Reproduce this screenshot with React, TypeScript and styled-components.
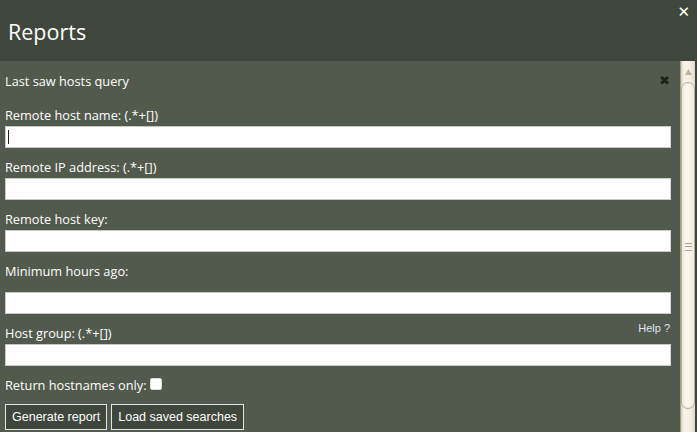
import styled, { createGlobalStyle } from 'styled-components';

const Global = createGlobalStyle`
  html, body {
    margin: 0;
    padding: 0;
    background: #3f463b;
  }
  body {
    width: 697px;
    height: 432px;
    overflow: hidden;
    font-family: 'Open Sans', 'DejaVu Sans', sans-serif;
  }
`;

const Dialog = styled.div`
  width: 697px;
  height: 432px;
  display: flex;
  flex-direction: column;
  background: #3f463b;
`;

const Header = styled.div`
  height: 61px;
  flex: none;
  display: flex;
  align-items: flex-start;
  justify-content: space-between;
  padding: 0 0 0 8px;
  box-sizing: border-box;
`;

const Title = styled.h1`
  margin: 17px 0 0 0;
  font-size: 21.5px;
  font-weight: 400;
  color: #ffffff;
  line-height: 30px;
`;

const CloseX = styled.span`
  margin: 4px 7px 0 0;
  color: #ffffff;
  font-family: 'DejaVu Sans', sans-serif;
  font-weight: 700;
  font-size: 15px;
  line-height: 16px;
`;

const Body = styled.div`
  flex: 1;
  display: flex;
  min-height: 0;
`;

const Panel = styled.div`
  width: 680px;
  flex: none;
  background: #52594d;
  padding: 11px 9px 0 5px;
  box-sizing: border-box;
  overflow: hidden;
  color: #ffffff;
  font-size: 12.75px;
`;

const PanelHead = styled.div`
  display: flex;
  justify-content: space-between;
  align-items: center;
  height: 18px;
  line-height: 18px;
  margin-bottom: 16px;
`;

const DarkX = styled.span`
  color: #1e221c;
  font-family: 'DejaVu Sans', sans-serif;
  font-weight: 700;
  font-size: 13px;
  margin-right: 1px;
`;

const Field = styled.div`
  margin-bottom: 10px;
  display: flex;
  flex-direction: column;
`;

const LabelRow = styled.div<{ $extra?: number }>`
  display: flex;
  justify-content: space-between;
  align-items: flex-end;
  line-height: 18px;
  height: 18px;
  margin-bottom: ${p => 2 + (p.$extra ?? 0)}px;
`;

const Help = styled.a`
  font-family: 'Liberation Sans', Arial, sans-serif;
  font-size: 11px;
  color: #dfe6f2;
  text-decoration: none;
  margin-bottom: 5px;
  margin-right: 1px;
`;

const InputWrap = styled.div`
  position: relative;
`;

const TextInput = styled.input`
  width: 666px;
  height: 22px;
  box-sizing: border-box;
  border: 1px solid #c9c9c9;
  border-right-color: #d8d8d8;
  background: #ffffff;
  padding: 0 4px;
  margin: 0;
  outline: none;
  font-size: 13px;
  display: block;
`;

const Caret = styled.span`
  display: block;
  width: 1px;
  height: 14px;
  background: #222;
  position: absolute;
  left: 3px;
  top: 4px;
`;

const CheckRow = styled.label`
  display: flex;
  align-items: center;
  height: 18px;
  line-height: 18px;
  margin: 0 0 10px;
`;

const Check = styled.span`
  width: 10px;
  height: 10px;
  margin: -2px 0 0 3px;
  background: #ffffff;
  border-radius: 2px;
  border: 1px solid #dcdcdc;
`;

const Buttons = styled.div`
  display: flex;
  gap: 4px;
`;

const Button = styled.button`
  height: 26px;
  padding: 0 6px;
  background: #3f463b;
  border: 1px solid #e4e4e4;
  color: #ffffff;
  font-family: 'Liberation Sans', Arial, sans-serif;
  font-size: 12.5px;
  border-radius: 0;
`;

const Scrollbar = styled.div`
  width: 15px;
  flex: none;
  display: flex;
  flex-direction: column;
  align-items: stretch;
  background: linear-gradient(90deg, #d7cbb4 0, #f7f3ea 20%, #f3eee4 70%, #e0d6c4 100%);
  border-left: 1px solid #a59b86;
  box-sizing: border-box;
  padding-top: 1px;
`;

const Arrow = styled.div`
  height: 20px;
  display: flex;
  justify-content: center;
  align-items: center;
  svg { display: block; }
`;

const Thumb = styled.div`
  height: 325px;
  border: 1px solid #bcae93;
  border-radius: 7px;
  background: linear-gradient(90deg, #efe8da 0, #fbf9f3 40%, #f1ebdf 100%);
  display: flex;
  align-items: center;
  justify-content: center;
`;

const Grip = styled.div`
  width: 7px;
  height: 6px;
  border-top: 1px solid #b3a58a;
  border-bottom: 1px solid #b3a58a;
  position: relative;
  margin-top: 2px;
  &::after {
    content: '';
    position: absolute;
    left: 0;
    right: 0;
    top: 2px;
    border-top: 1px solid #b3a58a;
  }
`;

const Edge = styled.div`
  width: 2px;
  flex: none;
  background: #3f463b;
`;

const fields = [
  { label: 'Remote host name: (.*+[])', extra: 0 },
  { label: 'Remote IP address: (.*+[])', extra: 0 },
  { label: 'Remote host key:', extra: 0 },
  { label: 'Minimum hours ago:', extra: 10 },
  { label: 'Host group: (.*+[])', extra: 0, help: true },
];

export default function App() {
  return (
    <Dialog>
      <Global />
      <Header>
        <Title>Reports</Title>
        <CloseX>✕</CloseX>
      </Header>
      <Body>
        <Panel>
          <PanelHead>
            <span>Last saw hosts query</span>
            <DarkX>✖</DarkX>
          </PanelHead>
          {fields.map((f, i) => (
            <Field key={i}>
              <LabelRow $extra={f.extra}>
                <span>{f.label}</span>
                {f.help && <Help href="#">Help ?</Help>}
              </LabelRow>
              <InputWrap>
                <TextInput />
                {i === 0 && <Caret />}
              </InputWrap>
            </Field>
          ))}
          <CheckRow>
            Return hostnames only:
            <Check />
          </CheckRow>
          <Buttons>
            <Button>Generate report</Button>
            <Button>Load saved searches</Button>
          </Buttons>
        </Panel>
        <Scrollbar>
          <Arrow>
            <svg width="7" height="6" viewBox="0 0 7 6">
              <path d="M3.5 0 L7 6 L0 6 Z" fill="#c2b49a" />
            </svg>
          </Arrow>
          <Thumb>
            <Grip />
          </Thumb>
        </Scrollbar>
        <Edge />
      </Body>
    </Dialog>
  );
}
